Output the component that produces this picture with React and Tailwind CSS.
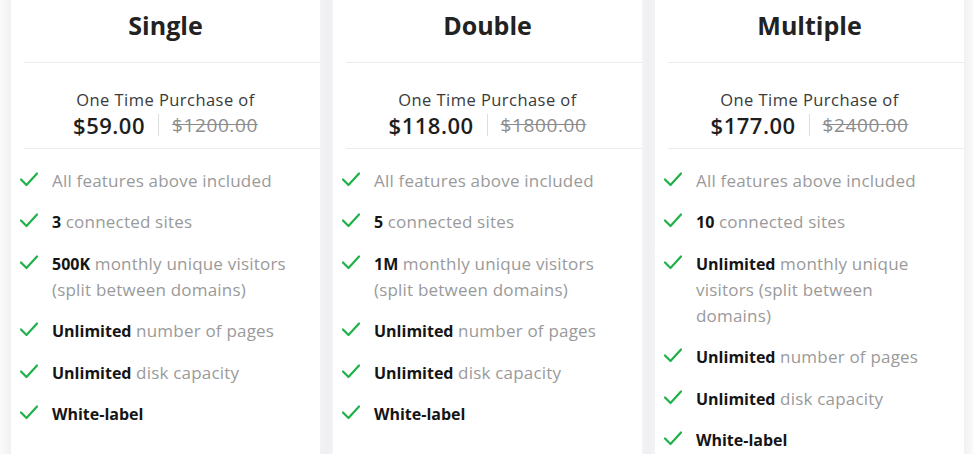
const plans = [
  {
    name: "Single",
    price: "$59.00",
    was: "$1200.00",
    features: [
      { text: "All features above included" },
      { bold: "3", text: " connected sites" },
      { bold: "500K", text: " monthly unique visitors (split between domains)" },
      { bold: "Unlimited", text: " number of pages" },
      { bold: "Unlimited", text: " disk capacity" },
      { bold: "White-label" },
    ],
  },
  {
    name: "Double",
    price: "$118.00",
    was: "$1800.00",
    features: [
      { text: "All features above included" },
      { bold: "5", text: " connected sites" },
      { bold: "1M", text: " monthly unique visitors (split between domains)" },
      { bold: "Unlimited", text: " number of pages" },
      { bold: "Unlimited", text: " disk capacity" },
      { bold: "White-label" },
    ],
  },
  {
    name: "Multiple",
    price: "$177.00",
    was: "$2400.00",
    features: [
      { text: "All features above included" },
      { bold: "10", text: " connected sites" },
      { bold: "Unlimited", text: " monthly unique visitors (split between domains)" },
      { bold: "Unlimited", text: " number of pages" },
      { bold: "Unlimited", text: " disk capacity" },
      { bold: "White-label" },
    ],
  },
];

function Check() {
  return (
    <svg width="18" height="15" viewBox="0 0 18 15" fill="none" className="shrink-0 mt-[4px]">
      <path d="M1 7.5 L6.5 13 L17 1.5" stroke="#1fb14a" strokeWidth="2.2" strokeLinecap="round" strokeLinejoin="round" />
    </svg>
  );
}

function PlanCard({ plan }) {
  return (
    <div className="w-[309px] shrink-0 bg-white h-full">
      <h2 className="pt-[9px] pb-[21px] text-center text-[25px] leading-[32px] font-bold text-[#222]">
        {plan.name}
      </h2>
      <div className="ml-[13px] h-px bg-[#ececee]" />
      <div className="pt-[26px] pb-[9px] text-center">
        <p className="text-[16.5px] leading-[22px] tracking-[0.45px] text-[#3a3a3a]">One Time Purchase of</p>
        <div className="flex items-center justify-center leading-[28px]">
          <span className="text-[22px] font-semibold tracking-[0.5px] text-[#1e1e1e]">{plan.price}</span>
          <span className="mx-[13px] w-px h-[22px] bg-[#dedede]" />
          <span className="text-[19px] tracking-[0.6px] text-[#8c8c8c] line-through decoration-[#8c8c8c]">{plan.was}</span>
        </div>
      </div>
      <div className="ml-[13px] h-px bg-[#ececee]" />
      <ul className="pt-[19px] pl-[9px] pr-[16px] flex flex-col gap-[15.4px]">
        {plan.features.map((f, i) => (
          <li key={i} className="flex items-start gap-[14px] text-[17px] leading-[26px] tracking-[0.2px]">
            <Check />
            <p className="text-[#9a9a9a]">
              {f.bold && (
                <strong className="text-[16px] font-bold tracking-normal text-[#151515]">{f.bold}</strong>
              )}
              {f.text}
            </p>
          </li>
        ))}
      </ul>
    </div>
  );
}

export default function App() {
  return (
    <div
      className="flex h-[454px] w-[973px] overflow-hidden bg-white"
      style={{ fontFamily: '"Open Sans", "Noto Sans", sans-serif' }}
    >
      <div className="w-[11px] shrink-0 bg-gradient-to-r from-[#fbfbfc] to-[#f1f1f3]" />
      <PlanCard plan={plans[0]} />
      <div className="w-[13px] shrink-0 bg-gradient-to-r from-[#f3f3f5] via-[#efeff1] to-[#f3f3f5]" />
      <PlanCard plan={plans[1]} />
      <div className="w-[13px] shrink-0 bg-gradient-to-r from-[#f3f3f5] via-[#efeff1] to-[#f3f3f5]" />
      <PlanCard plan={plans[2]} />
      <div className="w-[9px] shrink-0 bg-gradient-to-r from-[#f1f1f3] to-[#fafafb]" />
    </div>
  );
}
